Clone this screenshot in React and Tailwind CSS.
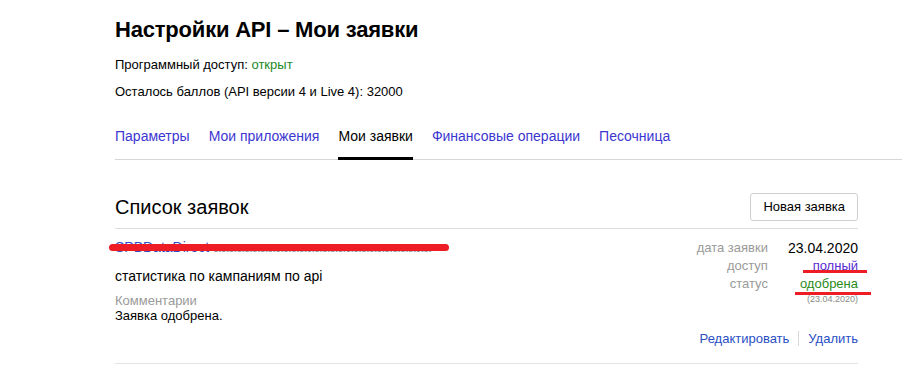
export default function App() {
  const tabs = ['Параметры', 'Мои приложения', 'Мои заявки', 'Финансовые операции', 'Песочница'];
  const active = 'Мои заявки';

  return (
    <div className="w-[902px] h-[365px] bg-white text-black overflow-hidden font-['Liberation_Sans',Arial,sans-serif]">
      {/* Header */}
      <div className="pl-[115px] pt-[15px]">
        <h1 className="text-[22px] leading-[30px] font-bold tracking-[-0.2px]">Настройки API – Мои заявки</h1>
        <p className="mt-[12px] text-[13px] leading-[16px]">
          Программный доступ: <span className="text-[#21891f]">открыт</span>
        </p>
        <p className="mt-[11px] text-[13px] leading-[16px]">Осталось баллов (API версии 4 и Live 4): 32000</p>
      </div>

      {/* Tabs */}
      <div className="ml-[115px] mt-[26px] flex gap-[19px] border-b border-[#d6d6d6] text-[14px]">
        {tabs.map(t => (
          <div
            key={t}
            className={
              t === active
                ? 'pb-[10px] -mb-px border-b-[3px] border-black text-black'
                : 'pb-[12px] text-[#3c36d1]'
            }
          >
            {t}
          </div>
        ))}
      </div>

      {/* Applications list */}
      <div className="ml-[115px] w-[743px] mt-[33px]">
        <div className="flex items-center justify-between pb-[7px] border-b border-[#dedede]">
          <h2 className="text-[20px] leading-[28px]">Список заявок</h2>
          <button className="h-[28px] px-[12px] border border-[#cfcfcf] rounded-[3px] text-[13px] bg-white">Новая заявка</button>
        </div>

        <div className="relative flex justify-between pt-[10px] pb-[14px] border-b border-[#e3e3e3]">
          <div>
            <div className="text-[14px] leading-[16px] text-[#2a4fc4]">
              SPBDataDirect<span className="text-[#9a9aa8]"> аааааааааааааааааааааааааааа</span>
            </div>
            <div className="mt-[13px] text-[14px] leading-[16px]">статистика по кампаниям по api</div>
            <div className="mt-[9px] text-[13px] leading-[15px] text-[#9a9a9a]">Комментарии</div>
            <div className="text-[13px] leading-[15px]">Заявка одобрена.</div>
          </div>

          <div className="flex flex-col items-end">
            <div className="grid grid-cols-[auto_auto] gap-x-[20px] text-[13px] leading-[18px] text-right">
              <span className="text-[#9a9a9a]">дата заявки</span>
              <span className="text-[14px] text-black">23.04.2020</span>
              <span className="text-[#9a9a9a]">доступ</span>
              <span className="text-[#5a2ad1]">полный</span>
              <span className="text-[#9a9a9a]">статус</span>
              <span className="text-[#2a8a1a]">одобрена</span>
              <span />
              <span className="text-[9px] leading-[12px] text-[#8a8a8a]">(23.04.2020)</span>
            </div>
            <div className="mt-[24px] flex items-center text-[13px] text-[#2a4fc4]">
              <span>Редактировать</span>
              <span className="mx-[9px] h-[15px] w-px bg-[#d8d8d8]" />
              <span>Удалить</span>
            </div>
          </div>

          {/* red annotation marks */}
          <div className="absolute left-[-6px] top-[15px] w-[340px] h-[7px] rounded-full bg-[#ee1c25]" />
          <div className="absolute left-[688px] top-[41px] w-[64px] h-[3px] bg-[#ee1c25]" />
          <div className="absolute left-[680px] top-[63px] w-[76px] h-[3px] bg-[#ee1c25]" />
        </div>
      </div>
    </div>
  );
}
